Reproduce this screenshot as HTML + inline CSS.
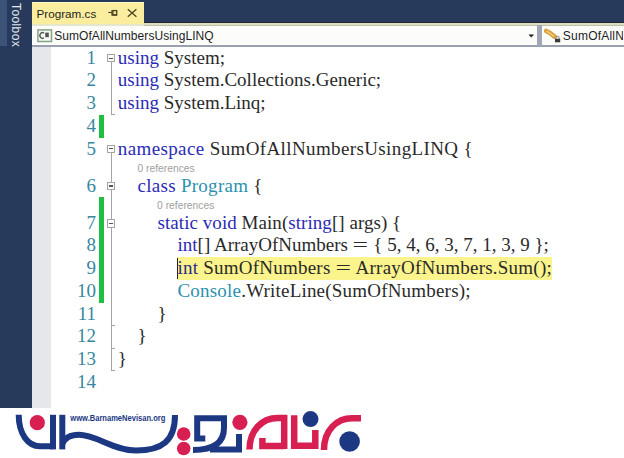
<!DOCTYPE html>
<html><head><meta charset="utf-8">
<style>
*{margin:0;padding:0;box-sizing:border-box}
html,body{width:624px;height:458px;overflow:hidden;background:#fff}
body{position:relative;font-family:"Liberation Sans",sans-serif}
.a{position:absolute}
.code{position:absolute;font-family:"Liberation Serif",serif;font-size:19px;line-height:22.7px;white-space:pre;color:#2a2a2a}
.k{color:#2b2bb5}
.t{color:#2b91af}
.eq{display:inline-block;transform:scaleX(1.45);margin:0 2.6px}
.ln{position:absolute;left:60px;width:36px;text-align:right;font-family:"Liberation Serif",serif;font-size:19px;line-height:22.7px;color:#36879f}
.cl{position:absolute;font-family:"Liberation Sans",sans-serif;font-size:10.3px;line-height:12px;color:#a0a0a0;white-space:pre}
.box{position:absolute;left:106.6px;width:8.6px;height:8.6px;border:1px solid #a5a5a5;background:#fff}
.box:after{content:"";position:absolute;left:1.3px;top:2.8px;width:4px;height:1.2px;background:#555}
.vl{position:absolute;left:111.2px;width:1px;background:#a5a5a5}
.tk{position:absolute;left:111.2px;width:4px;height:1px;background:#a5a5a5}
.gr{position:absolute;left:98.6px;width:5.4px;background:#20bf42}
</style></head><body>
<!-- navy frame -->
<div class="a" style="left:0;top:0;width:624px;height:23px;background:#283a5c"></div>
<div class="a" style="left:0;top:0;width:32px;height:408px;background:#283a5c"></div>
<div class="a" style="left:0;top:0;width:7px;height:46px;background:#3d5279"></div>
<div class="a" style="left:24px;top:2px;width:44px;height:12px;transform-origin:0 0;transform:translate(0,0) rotate(90deg);"></div>
<div class="a" style="left:22.3px;top:2.7px;transform-origin:0 0;transform:rotate(90deg);font-size:12px;line-height:12px;letter-spacing:0.4px;color:#e2e7f0;white-space:pre">Toolbox</div>

<!-- tab -->
<div class="a" style="left:32px;top:1.7px;width:111.8px;height:22px;background:#faee9e"></div>
<div class="a" style="left:32px;top:1.7px;width:111.8px;height:1.5px;background:#fffac6"></div>
<div class="a" style="left:36.5px;top:6.6px;font-size:11.7px;line-height:14px;color:#1e1e1e;white-space:pre">Program.cs</div>
<svg class="a" style="left:106px;top:8px" width="14" height="12" viewBox="0 0 14 12"><path d="M2.3 4.5H6" stroke="#4a4420" stroke-width="1.1" fill="none"/><path d="M6 2V7.7" stroke="#4a4420" stroke-width="1.2"/><rect x="6.9" y="2.6" width="3.8" height="4.4" stroke="#4a4420" stroke-width="1.3" fill="none"/><path d="M6.5 7H11" stroke="#4a4420" stroke-width="1.4"/></svg>
<svg class="a" style="left:127px;top:8px" width="11" height="11" viewBox="0 0 11 11"><path d="M0.8 1.2L9.4 8.8M9.4 1.2L0.8 8.8" stroke="#4a4420" stroke-width="1.3"/></svg>

<!-- tab line -->
<div class="a" style="left:143.8px;top:21.8px;width:480.2px;height:1px;background:#20242c"></div>
<div class="a" style="left:143.8px;top:22.7px;width:480.2px;height:3.2px;background:#dcdec4"></div>
<div class="a" style="left:32px;top:23.6px;width:111.8px;height:2.3px;background:#e6e6cc"></div>
<div class="a" style="left:143.8px;top:24.8px;width:480px;height:1px;background:#bfc1a4"></div>
<!-- nav bar -->
<div class="a" style="left:32px;top:25.9px;width:592px;height:19.6px;background:#fcfcfb"></div>
<div class="a" style="left:32px;top:45px;width:592px;height:1.6px;background:#9aa1ae"></div>
<svg class="a" style="left:37px;top:28.5px" width="16" height="14" viewBox="0 0 16 14"><rect x="0.9" y="0.9" width="13.6" height="11.6" fill="#f7faf5" stroke="#86a286" stroke-width="1.5"/><path d="M7 4.2 A2.6 2.8 0 1 0 7 8.8" stroke="#4f5a4f" stroke-width="1.4" fill="none"/><rect x="8.2" y="3.6" width="3.6" height="4.6" fill="#4f5a4f"/></svg>
<div class="a" style="left:54.2px;top:29.2px;font-size:12px;line-height:14px;color:#1e1e1e;white-space:pre;letter-spacing:0.06px">SumOfAllNumbersUsingLINQ</div>
<svg class="a" style="left:528px;top:34px" width="7" height="4" viewBox="0 0 7 4"><path d="M0.5 0.5H6L3.25 3.5Z" fill="#1e1e1e"/></svg>
<div class="a" style="left:537.2px;top:25px;width:4.4px;height:21px;background:#a0a8b8"></div>
<svg class="a" style="left:544px;top:28px" width="18" height="16" viewBox="0 0 18 16"><path d="M2.2 3 L6 5 L10.5 8.6" stroke="#d9a03e" stroke-width="4.6" fill="none" stroke-linecap="round" stroke-linejoin="round"/><path d="M3 3.3 L6 5.2 L9.5 8" stroke="#f3d27a" stroke-width="1.4" fill="none" stroke-linecap="round"/><path d="M12 10.8 V9.9 A1.6 1.5 0 0 1 15.2 9.9 V10.8" stroke="#a89898" stroke-width="1.1" fill="none"/><rect x="11" y="10.7" width="5.2" height="3.6" fill="#3a3a3a"/></svg>
<div class="a" style="left:542px;top:26px;width:81px;height:19px;overflow:hidden"><div class="a" style="left:20.8px;top:3.2px;font-size:12px;line-height:14px;color:#1e1e1e;white-space:pre;letter-spacing:0.22px">SumOfAllNumbersUsingLINQ</div></div>

<!-- editor -->
<div class="a" style="left:32px;top:46.6px;width:18.5px;height:361px;background:#e5e7ea"></div>

<!-- green change bars -->
<div class="gr" style="top:114.85px;height:22.75px"></div>
<div class="gr" style="top:197.4px;height:105.3px"></div>

<!-- outline -->
<div class="box" style="top:53.9px"></div>
<div class="vl" style="top:62.4px;height:52.5px"></div><div class="tk" style="top:114.35px"></div>
<div class="box" style="top:144.5px"></div>
<div class="vl" style="top:153px;height:218px"></div>
<div class="box" style="top:181.7px"></div>
<div class="box" style="top:219px"></div>
<div class="tk" style="top:324.95px"></div>
<div class="tk" style="top:347.7px"></div>
<div class="tk" style="top:370.45px"></div>

<!-- line numbers -->
<div class="ln" style="top:46.6px">1</div>
<div class="ln" style="top:69.35px">2</div>
<div class="ln" style="top:92.1px">3</div>
<div class="ln" style="top:114.85px">4</div>
<div class="ln" style="top:137.6px">5</div>
<div class="ln" style="top:174.65px">6</div>
<div class="ln" style="top:211.7px">7</div>
<div class="ln" style="top:234.45px">8</div>
<div class="ln" style="top:257.2px">9</div>
<div class="ln" style="top:279.95px">10</div>
<div class="ln" style="top:302.7px">11</div>
<div class="ln" style="top:325.45px">12</div>
<div class="ln" style="top:348.2px">13</div>
<div class="ln" style="top:370.95px">14</div>

<!-- highlight -->
<div class="a" style="left:177px;top:257.2px;width:375px;height:22.75px;background:#fbf48c"></div>
<div class="a" style="left:177.3px;top:258.4px;width:1.2px;height:20.6px;background:#222"></div>

<!-- code -->
<div class="code" style="left:117.8px;top:46.6px"><span class="k">using</span> System;</div>
<div class="code" style="left:117.8px;top:69.35px"><span class="k">using</span> System.Collections.Generic;</div>
<div class="code" style="left:117.8px;top:92.1px"><span class="k">using</span> System.Linq;</div>
<div class="code" style="left:117.8px;top:137.6px;letter-spacing:0.38px"><span class="k">namespace</span> SumOfAllNumbersUsingLINQ {</div>
<div class="cl" style="left:137.5px;top:163.3px">0 references</div>
<div class="code" style="left:137.5px;top:174.65px;letter-spacing:0.28px"><span class="k">class</span> <span class="t">Program</span> {</div>
<div class="cl" style="left:157.1px;top:200.3px">0 references</div>
<div class="code" style="left:157.6px;top:211.7px;letter-spacing:0.05px"><span class="k">static</span> <span class="k">void</span> Main(<span class="k">string</span>[] args) {</div>
<div class="code" style="left:177.5px;top:234.45px;letter-spacing:0px"><span class="k">int</span>[] ArrayOfNumbers <span class="eq">=</span> { 5, 4, 6, 3, 7, 1, 3, 9 };</div>
<div class="code" style="left:177.5px;top:257.2px;letter-spacing:0.23px"><span style="color:#2a2a8a">int</span> SumOfNumbers <span class="eq">=</span> ArrayOfNumbers.Sum();</div>
<div class="code" style="left:177.5px;top:279.95px;letter-spacing:0.2px"><span class="t">Console</span>.WriteLine(SumOfNumbers);</div>
<div class="code" style="left:157.6px;top:302.7px">}</div>
<div class="code" style="left:137.5px;top:325.45px">}</div>
<div class="code" style="left:117.8px;top:348.2px">}</div>

<!-- logo -->
<svg class="a" style="left:0;top:400px" width="380" height="58" viewBox="0 400 380 58">
<g fill="none" stroke="#1d3883" stroke-width="6">
<path d="M18.7 414.8 C18.7 434 28 446.2 40 446.2 H53"/>
<path d="M53 414.8 V449.4"/>
<path d="M62.3 414.8 V449.4"/>
<path d="M62.3 444 Q66 434.8 79 434.8 C96 434.8 114 450.5 136 450.5 C162 450.5 175 441 175 415"/>
<path d="M205.3 438.6 H197.2 V418.2 H224 V428 Q224 450 193 450"/>
<path d="M210 449.5 H239 V434"/>
</g>
<g fill="#d81f52">
<circle cx="37.3" cy="422.7" r="7.6"/>
<circle cx="183.7" cy="434" r="6.8"/>
<circle cx="183.7" cy="448.5" r="6.8"/>
<circle cx="239.9" cy="422.3" r="7.6"/>
</g>
<g fill="#1d3883">
<circle cx="310.5" cy="419.1" r="8"/>
<circle cx="349.6" cy="441.5" r="10.3"/>
</g>
<g fill="none" stroke="#d81f52" stroke-width="6.5">
<path d="M249.5 449.6 C249.5 430 262 418 278 418 H284.2 V449"/>
<path d="M262.4 438 V446 H284.2"/>
<path d="M294.2 415.3 V445.7 H315.3 V430"/>
<path d="M324 449.9 C324 430 337 418.3 352 418.3 H361"/>
</g>
<text x="70.3" y="421.2" font-family="Liberation Sans" font-weight="bold" font-size="9.3" fill="#1d3883" textLength="95" lengthAdjust="spacingAndGlyphs">www.BarnameNevisan.org</text>
</svg>
</body></html>
